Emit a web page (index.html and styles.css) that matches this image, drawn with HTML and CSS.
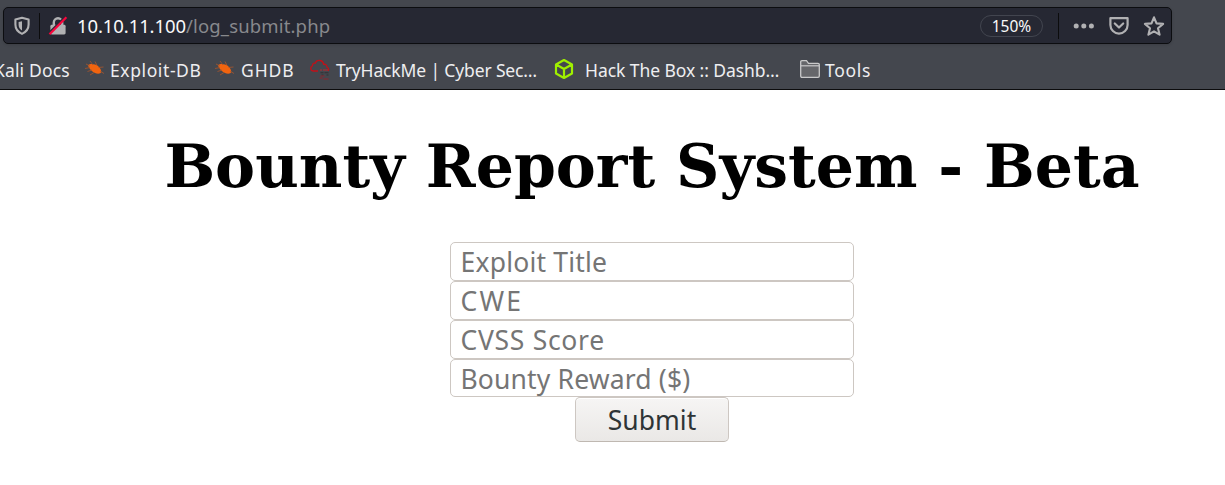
FILE: index.html
```html
<!DOCTYPE html>
<html lang="en">
<head>
<meta charset="utf-8">
<title>Bounty Report System - Beta</title>
<link rel="stylesheet" href="styles.css">
</head>
<body>
<header class="chrome">
  <div class="urlbar">
    <svg class="shield" width="18" height="20" viewBox="0 0 18 20"><path d="M9 1.8 15.6 3.6V8.6C15.6 13 12.7 16.3 9 17.9 5.3 16.3 2.4 13 2.4 8.6V3.6Z" fill="none" stroke="#b1b1b3" stroke-width="2.1" stroke-linejoin="round"/><path d="M9 5.2 5.6 6V9C5.6 11.6 7 13.4 9 14.6Z" fill="#b1b1b3"/></svg>
    <span class="divider"></span>
    <svg class="lock" width="20" height="20" viewBox="0 0 20 20"><path d="M5.8 9V6.5a4.2 4.2 0 0 1 8.400 0V9" fill="none" stroke="#b1b1b3" stroke-width="2.4"/><rect x="2.400" y="8.800" width="15.200" height="9.600" rx="1.400" fill="#b1b1b3"/><path d="M.6 17.400 16.800 1.200" stroke="#262833" stroke-width="2"/><path d="M1.500 18.200 18.400 1.300" stroke="#f7053c" stroke-width="2.300"/></svg>
    <div class="address"><span class="host">10.10.11.100</span><span class="path">/log_submit.php</span></div>
    <span class="zoom"><span>150%</span></span>
    <span class="divider actions-divider"></span>
    <svg class="dots" width="22" height="8" viewBox="0 0 22 8"><g fill="#b1b1b3"><circle cx="3.2" cy="4" r="2.5"/><circle cx="10.8" cy="4" r="2.5"/><circle cx="18.4" cy="4" r="2.5"/></g></svg>
    <svg class="pocket" width="20" height="20" viewBox="0 0 20 20"><path d="M1.400 2.200H18.600V9A8.600 8.600 0 0 1 1.400 9Z" fill="none" stroke="#b1b1b3" stroke-width="2.200" stroke-linejoin="round"/><path d="m5.800 7.500 4.200 4 4.200-4" fill="none" stroke="#b1b1b3" stroke-width="2.200" stroke-linecap="round" stroke-linejoin="round"/></svg>
    <svg class="star" width="22" height="22" viewBox="0 0 22 22"><path d="m11 2.300 2.500 6.100 6.600.5-5.100 4.300 1.600 6.500L11 16.300l-5.600 3.400L7 13.200 1.900 8.900l6.600-.5Z" fill="none" stroke="#b1b1b3" stroke-width="2.100" stroke-linejoin="round"/></svg>
  </div>
  <nav class="bookmarks">
    <a class="bm kali"><span>Kali Docs</span></a>
    <a class="bm exploit"><svg width="20" height="20" viewBox="0 0 20 20"><g id="bug"><path d="M3 6.500C4.500 4.800 7 4.600 10 5.500c4 1.400 6.300 4.600 6.200 7.300-.2 2.200-3.700 2.300-6.200 1.200C7 12.800 4 9.600 3 6.500Z" fill="#f2640f"/><path d="M0 9.500 5 8.500M2.500 12.500 7 11M5 16l4-2.500M5 2l3 4M10 2.500l2 4M13.500 8.500l5-.5M15 12l4 2.500M1 5l4 2" stroke="#a8562c" stroke-width=".8" fill="none"/></g></svg><span>Exploit-DB</span></a>
    <a class="bm ghdb"><svg width="20" height="20" viewBox="0 0 20 20"><use href="#bug"/></svg><span>GHDB</span></a>
    <a class="bm thm"><svg width="22" height="22" viewBox="0 0 22 22"><path d="M9 13H4.500C1.500 13 .7 9 3.500 8 3.300 5.500 5 4.800 6.300 5.200 7.500 1.500 14 1.300 14.600 6.300c2-.4 3.500 1 3.300 2.800 1.800.8 2.200 2.500 1.300 3.700" fill="none" stroke="#c11119" stroke-width="1.300"/><path d="M11 12h2m1 0h5" stroke="#b52b30" stroke-width="1.100"/><path d="M11.500 14.800h3m1 0h4M12.500 17h2m3 0h2" stroke="#303235" stroke-width="1.100"/><path d="M10.500 20h3m-2-2h4m-1 3h5" stroke="#8f252c" stroke-width="1"/></svg><span>TryHackMe | Cyber Sec…</span></a>
    <a class="bm htb"><svg width="20" height="22" viewBox="0 0 20 22"><path d="m10 2 8 4.500v9L10 20l-8-4.500v-9ZM2.500 6.800 10 11l7.500-4.200M10 11v8.500" fill="none" stroke="#9fef00" stroke-width="2.200" stroke-linejoin="round"/></svg><span>Hack The Box :: Dashb…</span></a>
    <a class="bm tools"><svg width="22" height="20" viewBox="0 0 22 20"><path d="M1.700 17V3q0-1.300 1.300-1.300h4.500l2 2.600H19q1.300 0 1.300 1.300V17q0 1.300-1.300 1.300H3Q1.700 18.300 1.700 17Z" fill="#66676b" stroke="#c9c9ca" stroke-width="1.300"/><path d="M2 6.800h18" stroke="#c9c9ca" stroke-width="1.200"/></svg><span>Tools</span></a>
  </nav>
</header>
<main class="page">
  <h1>Bounty Report System - Beta</h1>
  <form class="report">
    <label class="field"><span class="title">Exploit Title</span></label>
    <label class="field"><span class="cwe">CWE</span></label>
    <label class="field"><span class="score">CVSS Score</span></label>
    <label class="field last"><span class="reward">Bounty Reward ($)</span></label>
    <button type="button" class="submit">Submit</button>
  </form>
</main>
</body>
</html>
```
FILE: styles.css
```css
* { box-sizing: border-box; }
body { margin: 0; background: #fff; height: 485px; overflow: hidden; font-family: "Noto Sans", sans-serif; }
svg { display: block; flex: none; }
.chrome { height: 90px; background: #44474e; border-bottom: 1px solid #0c0c0d; padding: 7px 0 0 3px; }
.urlbar { display: flex; align-items: center; width: 1169px; height: 37px; background: #262833; border: 1px solid #0c0d10; border-radius: 5px; padding-left: 9px; box-shadow: 0 1px 3px #0002; }
.divider { width: 1px; height: 26px; background: #0c0c0d; flex: none; }
.shield { margin-right: 8px; }
.lock { margin-left: 8px; }
.address { display: flex; width: 903px; margin-left: 9px; font-size: 18.5px; line-height: 26px; white-space: nowrap; }
.host { width: 109px; color: #f9f9fa; letter-spacing: -.1px; }
.path { color: #88898d; letter-spacing: .15px; }
.zoom { display: flex; flex: none; align-items: center; justify-content: center; width: 63px; height: 22px; border: 1px solid #42454f; border-radius: 11px; color: #f9f9fa; font-size: 15.5px; line-height: 20px; }
.actions-divider { margin-left: 15px; }
.dots { margin-left: 14px; }
.pocket { margin-left: 14px; }
.star { margin-left: 14px; }
.bookmarks { display: flex; height: 45px; padding-top: 5px; margin-left: -9px; align-items: center; }
.bm { display: flex; align-items: center; flex: none; color: #eeeef0; font-size: 17.5px; line-height: 26px; white-space: nowrap; }
.bm span { padding-top: 1px; }
.kali { width: 91px; letter-spacing: .15px; }
.exploit { width: 130px; gap: 5px; letter-spacing: .6px; }
.ghdb { width: 94px; gap: 6px; letter-spacing: .9px; }
.thm { width: 245px; gap: 5px; letter-spacing: -.14px; }
.htb { width: 245px; gap: 11px; letter-spacing: -.07px; }
.tools { gap: 4px; letter-spacing: .7px; }
.page { padding: 41px 0 0 79px; }
h1 { margin: 0; text-align: center; font: bold 60px/70px "DejaVu Serif", serif; color: #000; white-space: nowrap; }
.report { display: flex; flex-direction: column; align-items: center; margin-top: 41px; }
.field { display: flex; align-items: center; width: 404px; height: 39px; padding: 0 9.5px; border: 1px solid #cdc7c2; border-radius: 5px; background: #fff; color: #757575; font-size: 26.5px; line-height: 36px; white-space: nowrap; }
.title { letter-spacing: .2px; }
.cwe { letter-spacing: 2.2px; }
.score { letter-spacing: .7px; }
.reward { letter-spacing: .15px; padding-top: 2px; }
.last { height: 38px; }
.submit { width: 154px; height: 45px; padding: 0; border: 1px solid #cdc7c2; border-bottom-color: #bfb8b1; border-radius: 5px; background: linear-gradient(#f6f5f4, #eae8e6); box-shadow: inset 0 1px #fff; color: #2e3436; font: 26.5px/40px "Noto Sans", sans-serif; }
```
